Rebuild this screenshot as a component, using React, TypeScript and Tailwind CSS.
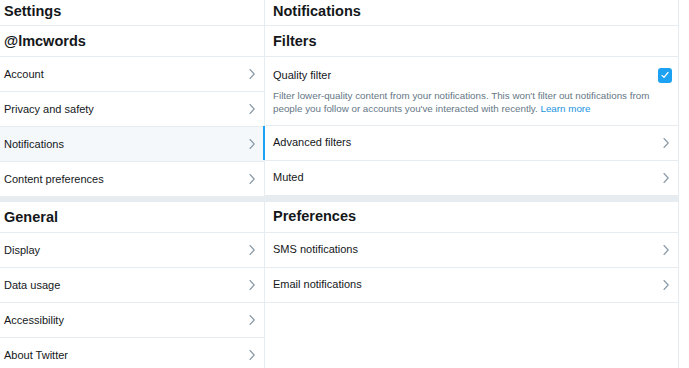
import React from 'react';

function Chevron() {
  return (
    <svg width="8" height="12" viewBox="0 0 8 12" fill="none" className="shrink-0">
      <path d="M2 1.5L6.2 6 2 10.5" stroke="#8899a6" strokeWidth="1.1" strokeLinecap="round" strokeLinejoin="round" />
    </svg>
  );
}

function Heading({ title, h, pl, top = false }: { title: string; h: string; pl: string; top?: boolean }) {
  return (
    <div
      className={`flex border-b border-[#e6ecf0] text-[14.5px] font-bold text-[#14171a] ${h} ${pl} ${
        top ? 'items-start pt-[1px]' : 'items-center pt-[1px]'
      }`}
    >
      {title}
    </div>
  );
}

function Row({
  label,
  pl,
  active = false,
  marker = false,
}: {
  label: string;
  pl: string;
  active?: boolean;
  marker?: boolean;
}) {
  return (
    <div
      className={`relative flex h-[35px] items-center justify-between border-b border-[#e6ecf0] pr-[8px] text-[11px] text-[#14171a] ${pl} ${
        active ? 'bg-[#f5f8fa]' : 'bg-white'
      }`}
    >
      {marker && <span className="absolute -left-[2px] top-0 h-full w-[2px] bg-[#1da1f2]" />}
      <span>{label}</span>
      <Chevron />
    </div>
  );
}

const account = ['Account', 'Privacy and safety', 'Notifications', 'Content preferences'];
const general = ['Display', 'Data usage', 'Accessibility', 'About Twitter'];

export default function App() {
  return (
    <div
      className="flex h-[368px] w-[689px] overflow-hidden bg-white"
      style={{ fontFamily: '"Liberation Sans", Arial, sans-serif' }}
    >
      {/* Left: settings menu */}
      <div className="w-[265px] shrink-0 border-r border-[#e6ecf0]">
        <Heading title="Settings" h="h-[26px]" pl="pl-[4px]" top />
        <Heading title="@lmcwords" h="h-[31px]" pl="pl-[4px]" />
        {account.map((label) => (
          <Row key={label} label={label} pl="pl-[4px]" active={label === 'Notifications'} />
        ))}
        <div className="h-[5px] bg-[#e6ecf0]" />
        <Heading title="General" h="h-[31px]" pl="pl-[4px]" />
        {general.map((label) => (
          <Row key={label} label={label} pl="pl-[4px]" />
        ))}
      </div>

      {/* Right: notifications */}
      <div className="w-[414px] shrink-0 border-r border-[#e6ecf0]">
        <Heading title="Notifications" h="h-[26px]" pl="pl-[8px]" top />
        <Heading title="Filters" h="h-[31px]" pl="pl-[8px]" />
        <div className="border-b border-[#e6ecf0] pb-[10px] pl-[8px] pr-[6px] pt-[10px]">
          <div className="flex items-center justify-between">
            <span className="text-[11px] text-[#14171a]">Quality filter</span>
            <span className="flex h-[15px] w-[14px] items-center justify-center rounded-[3px] bg-[#1da1f2]">
              <svg width="10" height="10" viewBox="0 0 10 10" fill="none">
                <path d="M2 5.3l2 2L8 2.5" stroke="white" strokeWidth="1.2" strokeLinecap="round" strokeLinejoin="round" />
              </svg>
            </span>
          </div>
          <p className="mt-[5px] max-w-[380px] text-[9.8px] leading-[13px] text-[#657786]">
            Filter lower-quality content from your notifications. This won't filter out notifications from people you
            follow or accounts you've interacted with recently. <a className="text-[#1b95e0]">Learn more</a>
          </p>
        </div>
        <Row label="Advanced filters" pl="pl-[8px]" marker />
        <Row label="Muted" pl="pl-[8px]" />
        <div className="h-[6px] bg-[#e6ecf0]" />
        <Heading title="Preferences" h="h-[31px]" pl="pl-[8px]" />
        <Row label="SMS notifications" pl="pl-[8px]" />
        <Row label="Email notifications" pl="pl-[8px]" />
      </div>
    </div>
  );
}
